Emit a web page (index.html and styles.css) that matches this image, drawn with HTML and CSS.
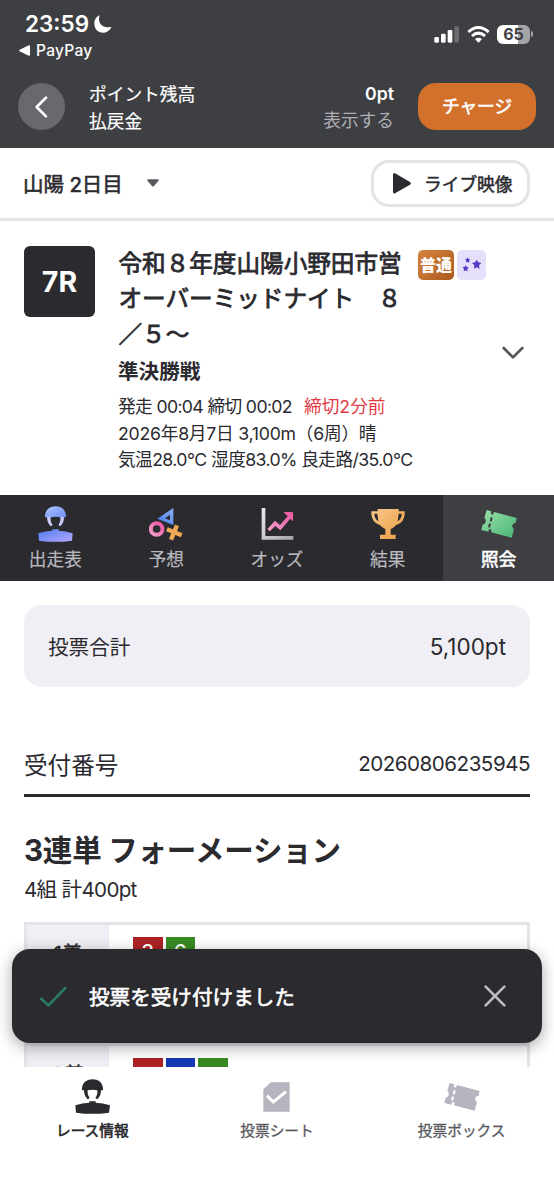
FILE: index.html
```html
<!DOCTYPE html>
<html lang="ja">
<head>
<meta charset="utf-8">
<title>照会</title>
<link rel="stylesheet" href="styles.css">
</head>
<body>
<svg class="defs" width="0" height="0" aria-hidden="true">
  <defs>
    <linearGradient id="blue" x1="0" y1="0" x2="1" y2="1"><stop offset="0" stop-color="#b4c8fb"/><stop offset=".5" stop-color="#8ba8f8"/><stop offset="1" stop-color="#6f8ff5"/></linearGradient>
    <linearGradient id="body" x1="0" y1="0" x2="1" y2="1"><stop offset="0" stop-color="#4f7df5"/><stop offset="1" stop-color="#b5a7fa"/></linearGradient>
    <linearGradient id="tri" x1="0" y1="1" x2="1" y2="0"><stop offset="0" stop-color="#3f78e8"/><stop offset="1" stop-color="#8fb4f8"/></linearGradient>
    <linearGradient id="pink" x1="0" y1="1" x2="1" y2="0"><stop offset="0" stop-color="#f6a0cc"/><stop offset="1" stop-color="#e8559f"/></linearGradient>
    <linearGradient id="gold" x1="0" y1="0" x2="1" y2="1"><stop offset="0" stop-color="#f8c98c"/><stop offset="1" stop-color="#eb9a3f"/></linearGradient>
    <linearGradient id="silver" x1="0" y1="0" x2="1" y2="1"><stop offset="0" stop-color="#ececf0"/><stop offset="1" stop-color="#a5a5ab"/></linearGradient>
    <linearGradient id="green" x1="0" y1="0" x2="1" y2="1"><stop offset="0" stop-color="#9be0a9"/><stop offset="1" stop-color="#45b475"/></linearGradient>
    <symbol id="ticket" viewBox="0 0 108 84">
      <path d="M17 0 L31 4 L29 12 L36 14 L39 6 L107 24 L104 38 C93 39 90 51 99 57 L92 83 L30 67 L32 59 L24 57 L22 65 L1 60 L5 44 C14 43 18 30 10 24 Z M29 21 L26 33 L32 35 L35 23 Z M24 40 L21 51 L27 53 L30 42 Z" fill-rule="evenodd"/>
    </symbol>
  </defs>
</svg>

<header class="top">
  <div class="status">
    <div class="status-left">
      <div class="clock">23:59
        <svg width="18" height="18" viewBox="0 0 54 54"><path d="M17 1 C9 23 25 43 53 35 C47 47 37 53 27 53 C12 53 1 41 1 26 C1 14 8 4 17 1Z" fill="#fff"/></svg>
      </div>
      <div class="return"><svg width="12" height="11" viewBox="0 0 36 33"><path d="M2 14 L29 1 Q33 0 33 4 V29 Q33 33 29 32 L2 19 Q-1 16 2 14Z" fill="#fff"/></svg>PayPay</div>
    </div>
    <div class="status-right">
      <svg width="26" height="17" viewBox="0 0 78 51"><g fill="#fff"><rect x="1" y="33" width="14" height="17" rx="4"/><rect x="21" y="23" width="14" height="27" rx="4"/><rect x="41" y="12" width="14" height="38" rx="4"/></g><rect x="61" y="1" width="14" height="49" rx="4" fill="#6c6c70"/></svg>
      <svg width="23" height="17" viewBox="0 0 69 51"><g fill="none" stroke="#fff" stroke-width="9"><path d="M4 18 Q34 -9 65 18"/><path d="M15 30 Q34 13 54 30"/></g><path d="M24 39 Q34 31 45 39 L37 48 Q34 51 32 48Z" fill="#fff"/></svg>
      <div class="battery"><span>65</span></div><i class="battery-tip"></i>
    </div>
  </div>
  <div class="account">
    <div class="back"><svg width="14" height="22" viewBox="0 0 42 66"><path d="M36 5 L8 33 L36 61" fill="none" stroke="#fff" stroke-width="8" stroke-linecap="round" stroke-linejoin="round"/></svg></div>
    <div class="balance"><span>ポイント残高</span><span>払戻金</span></div>
    <div class="amount"><b>0pt</b><span>表示する</span></div>
    <div class="charge">チャージ</div>
  </div>
</header>

<div class="venue">
  <span class="venue-name">山陽 2日目</span>
  <svg class="caret" width="12" height="8" viewBox="0 0 36 24"><path d="M3 1 H33 Q37 2 34 6 L21 21 Q18 24 15 21 L2 6 Q-1 2 3 1Z" fill="#57585d"/></svg>
  <div class="live"><svg width="18" height="21" viewBox="0 0 54 63"><path d="M0 4 Q1 -1 6 1 L51 27 Q56 31 51 35 L6 61 Q1 63 0 58Z" fill="#2a2a2f"/></svg>ライブ映像</div>
</div>

<section class="race">
  <div class="race-no">7R</div>
  <div class="race-info">
    <h1>令和８年度山陽小野田市営<br>オーバーミッドナイト　８<br>／５〜</h1>
    <h2>準決勝戦</h2>
    <p class="times">発走 00:04 締切 00:02<span class="deadline">締切2分前</span></p>
    <p class="course">2026年8月7日 3,100m（6周）晴</p>
    <p class="weather">気温28.0°C 湿度83.0% 良走路/35.0°C</p>
  </div>
  <div class="race-side">
    <div class="badges">
      <span class="badge-normal">普通</span>
      <span class="badge-night"><svg width="20" height="17" viewBox="0 0 60 51" fill="#5338c5"><path d="M44 8 L48.500 16 L58 18 L51 25 L52.500 35 L44 31 L35.500 35 L37 25 L30 18 L39.500 16Z"/><path d="M17 1 L19.500 6 L25 7 L21 11 L22 17 L17 14 L12 17 L13 11 L9 7 L14.500 6Z"/><path d="M11 24 L14 30 L20 31 L16 36 L17 43 L11 40 L5 43 L6 36 L1 31 L8 30Z"/></svg></span>
    </div>
    <svg class="expand" width="22" height="14" viewBox="0 0 66 42"><path d="M5 6 L33 34 L61 6" fill="none" stroke="#56575c" stroke-width="8" stroke-linecap="round" stroke-linejoin="round"/></svg>
  </div>
</section>

<nav class="tabs">
  <div class="tab"><div class="tab-icon">
    <svg width="35" height="36" viewBox="0 0 105 108"><path d="M21 34 V28 C23 9 37 1 53 1 C69 1 82 9 84 28 V34 H68 Q53 30 37 34Z" fill="url(#blue)"/><path d="M27 33 Q27 51 38 61 L44 57 Q36 46 38 32Z M78 33 Q78 51 67 61 L61 57 Q69 46 67 32Z" fill="#c9cafc"/><path d="M43 70 H62 V74 Q84 75 104 82 L102 104 Q53 111 3 104 L1 82 Q22 75 43 74Z" fill="url(#body)"/></svg></div>出走表</div>
  <div class="tab"><div class="tab-icon">
    <svg width="34" height="34" viewBox="0 0 102 102"><path d="M73 3 L25 35 L73 54Z M63 23 V40 L48 34Z" fill="url(#tri)" fill-rule="evenodd"/><circle cx="23" cy="66" r="17.500" fill="none" stroke="url(#pink)" stroke-width="12"/><path d="M54 67 L98 85 M84 55 L66 98" stroke="#efab57" stroke-width="13"/></svg></div>予想</div>
  <div class="tab"><div class="tab-icon">
    <svg width="34" height="34" viewBox="0 0 102 102"><path d="M5 3 H16 V87 H100 V98 H5Z" fill="url(#silver)"/><path d="M22 66 L45 41 L60 54 L83 28 L70 15 H99 V43 L91 35 L61 70 L46 57 L29 73Z" fill="url(#pink)"/></svg></div>オッズ</div>
  <div class="tab"><div class="tab-icon">
    <svg width="34" height="34" viewBox="0 0 102 102"><path d="M20 6 H83 V13 H101 Q104 45 75 55 Q67 64 59 66 V83 H74 V96 H27 V83 H43 V66 Q35 63 27 55 Q-1 44 1 13 H20Z M10 20 Q10 35 22 43 L19 20Z M92 20 H83 L80 43 Q92 35 92 20Z" fill="url(#gold)" fill-rule="evenodd"/></svg></div>結果</div>
  <div class="tab active"><div class="tab-icon"><svg width="36" height="28" fill="url(#green)"><use href="#ticket"/></svg></div>照会</div>
</nav>

<main class="content">
  <div class="total"><span>投票合計</span><span class="total-value">5,100pt</span></div>
  <div class="receipt"><span class="receipt-label">受付番号</span><span class="receipt-no">20260806235945</span></div>
  <h3>3連単 フォーメーション</h3>
  <p class="summary">4組 計400pt</p>
  <div class="bets">
    <div class="bet"><div class="place">1着</div><div class="cars"><i class="red">3</i><i class="green">6</i></div></div>
    <div class="bet middle"><div class="place"></div></div>
    <div class="bet"><div class="place">3着</div><div class="cars"><i class="red"></i><i class="blue"></i><i class="green"></i></div></div>
  </div>
</main>

<div class="toast">
  <svg width="28" height="21" viewBox="0 0 84 63"><path d="M4 36 L28 58 L81 4" fill="none" stroke="#287c61" stroke-width="8"/></svg>
  <span>投票を受け付けました</span>
  <svg class="close" width="22" height="22" viewBox="0 0 66 66"><path d="M5 5 L61 61 M61 5 L5 61" stroke="#bcbcc1" stroke-width="8" stroke-linecap="round"/></svg>
</div>

<nav class="bottom">
  <div class="item current"><div class="item-icon"><svg width="35" height="36" viewBox="0 0 105 108" fill="#29292e"><path d="M21 34 V28 C23 9 37 1 53 1 C69 1 82 9 84 28 V34 H68 Q53 30 37 34Z"/><path d="M27 33 Q27 51 38 61 L44 57 Q36 46 38 32Z M78 33 Q78 51 67 61 L61 57 Q69 46 67 32Z"/><path d="M43 67 H62 V71 Q84 72 105 79 L102 101 Q53 108 3 101 L1 79 Q22 72 43 71Z"/></svg></div>レース情報</div>
  <div class="item"><div class="item-icon"><svg width="27" height="30" viewBox="0 0 81 90"><path d="M24 1 H80 V89 H1 V22Z" fill="#b5b5bf"/><path d="M12 41 L31 60 L69 29" fill="none" stroke="#fff" stroke-width="9"/></svg></div>投票シート</div>
  <div class="item"><div class="item-icon"><svg width="36" height="28" fill="#b5b5bf"><use href="#ticket"/></svg></div>投票ボックス</div>
</nav>
</body>
</html>
```
FILE: styles.css
```css
* { box-sizing: border-box; }
body {
  position: relative;
  width: 554px;
  height: 1200px;
  margin: 0;
  overflow: hidden;
  background: #fff;
  color: #2a2a2f;
  font-family: Inter, "Noto Sans CJK JP", sans-serif;
  font-size: 17.7px;
  -webkit-font-smoothing: antialiased;
}
svg { display: block; flex: none; }
.defs { position: absolute; }
h1, h2, h3, p { margin: 0; }

.top { height: 148px; background: #3e3f43; color: #fff; }
.status { display: flex; justify-content: space-between; height: 66px; padding: 11px 21px 0 19px; }
.clock { display: flex; align-items: center; gap: 5px; height: 25px; padding-left: 6px; font-size: 22.500px; font-weight: 600; }
.return { display: flex; align-items: center; gap: 5px; height: 28px; font-size: 15.500px; font-weight: 500; letter-spacing: .3px; }
.status-right { display: flex; align-items: center; height: 46px; gap: 7px; }
.battery { width: 33px; height: 19px; border-radius: 6px; background: linear-gradient(90deg, #fff 65%, #a5a5a8 65%); color: #3e3f43; font-size: 16px; font-weight: 700; line-height: 19px; text-align: center; }
.battery-tip { width: 2px; height: 6px; margin-left: -6px; border-radius: 0 2px 2px 0; background: #a5a5a8; }
.account { display: flex; align-items: center; height: 81px; padding: 0 18px; }
.back { display: flex; align-items: center; justify-content: center; width: 47px; height: 47px; padding-right: 2px; border-radius: 50%; background: #68686d; }
.balance, .amount { display: flex; flex-direction: column; line-height: 26.600px; }
.balance { margin: 4px 0 0 24px; -webkit-text-stroke: .2px; }
.amount { flex: 1; align-items: flex-end; margin: 3px 24px 0 0; color: #afafb5; }
.amount b { color: #fff; font-weight: 600; }
.charge { width: 118px; height: 47px; border-radius: 18px; background: #d3702b; line-height: 48px; text-align: center; -webkit-text-stroke: .6px; }

.venue { display: flex; align-items: center; height: 73px; padding: 0 24px 0 23px; border-bottom: 3px solid #e3e3e8; }
.venue-name { font-size: 20.500px; letter-spacing: -.1px; -webkit-text-stroke: .6px; }
.caret { margin-left: 24px; }
.live { display: flex; align-items: center; gap: 13px; width: 159px; height: 47px; margin-left: auto; padding-left: 19px; border: 3px solid #e3e3e8; border-radius: 18px; -webkit-text-stroke: .5px; }

.race { display: flex; height: 274px; padding: 25px 24px 0; }
.race-no { width: 71px; height: 71px; margin-right: 23px; border-radius: 6px; background: #2a2a2f; color: #fff; font-size: 28.500px; font-weight: 700; line-height: 71px; text-align: center; }
.race-info { width: 300px; white-space: nowrap; }
h1 { padding-left: .5px; font-size: 23.600px; font-weight: 400; line-height: 35.400px; -webkit-text-stroke: .8px; }
h2 { margin: 1px 0 4px; font-size: 20.600px; font-weight: 700; line-height: 37px; }
.race-info p { line-height: 26.600px; }
.times { letter-spacing: -.65px; }
.course { letter-spacing: -.25px; }
.weather { letter-spacing: -.6px; }
.deadline { margin-left: 12px; color: #e33b46; letter-spacing: 0; }
.race-side { display: flex; flex: 1; flex-direction: column; }
.badges { display: flex; gap: 3px; margin-top: 4px; }
.badge-normal, .badge-night { height: 30px; border-radius: 5px; }
.badge-normal { width: 36px; background: linear-gradient(135deg, #d88440, #a95a1d); color: #fff; font-size: 16px; font-weight: 900; line-height: 30px; text-align: center; }
.badge-night { display: flex; align-items: center; justify-content: center; width: 29px; background: #e5dffc; }
.expand { margin: 66px 0 0 84px; }

.tabs { display: grid; grid-template-columns: repeat(5, 1fr); height: 86px; background: #2a2a2f; color: #b9b9bf; }
.tab { padding-top: 9px; line-height: 32px; text-align: center; -webkit-text-stroke: .2px; }
.tab-icon { display: flex; align-items: center; justify-content: center; height: 40px; }
.active { background: #3e3f43; color: #fff; -webkit-text-stroke: .6px; }

.content { padding: 24px 24px 0; }
.total { display: flex; align-items: center; justify-content: space-between; height: 82px; padding: 0 24px; border-radius: 18px; background: #f0eff5; font-size: 20.600px; }
.total-value { font-size: 22.500px; letter-spacing: 0; }
.receipt { display: flex; align-items: center; justify-content: space-between; height: 64px; margin-top: 46px; border-bottom: 3px solid #2a2a2f; }
.receipt-label { font-size: 23.600px; }
.receipt-no { font-size: 20.600px; letter-spacing: -.5px; }
h3 { margin-top: 31px; font-size: 29.500px; font-weight: 700; line-height: 44px; letter-spacing: -.2px; }
.summary { margin-top: 3px; font-size: 20.600px; line-height: 30px; letter-spacing: -.7px; }
.bets { margin-top: 17px; border: 3px solid #e3e3e8; }
.bet { display: flex; height: 60px; }
.middle { height: 61px; border-block: 3px solid #e3e3e8; }
.place { width: 82px; background: #f0eff5; font-size: 20.600px; line-height: 58px; text-align: center; -webkit-text-stroke: .3px; }
.cars { display: flex; gap: 3px; padding: 12px 0 0 24px; }
.cars i { width: 29.500px; height: 30px; color: #fff; font-style: normal; font-size: 20.600px; font-weight: 500; line-height: 30px; text-align: center; }
.red { background: #ae2225; }
.green { background: #398a23; }
.blue { background: #1538b5; }

.toast { position: absolute; top: 949px; left: 12px; display: flex; align-items: center; width: 530px; height: 94px; padding: 0 36px 0 27px; border-radius: 18px; background: #2a2a2f; color: #fff; font-size: 20.600px; box-shadow: 0 4px 16px rgb(0 0 0 / .35); -webkit-text-stroke: .6px; }
.toast span { margin-left: 22px; }
.close { margin-left: auto; }

.bottom { position: absolute; top: 1067px; left: 0; display: grid; grid-template-columns: repeat(3, 1fr); width: 554px; height: 133px; background: #fff; color: #58595e; font-size: 14.700px; }
.item { padding-top: 11px; line-height: 30px; text-align: center; -webkit-text-stroke: .3px; }
.item-icon { display: flex; align-items: center; justify-content: center; height: 38px; }
.current { color: #29292e; -webkit-text-stroke: .6px; }
```
